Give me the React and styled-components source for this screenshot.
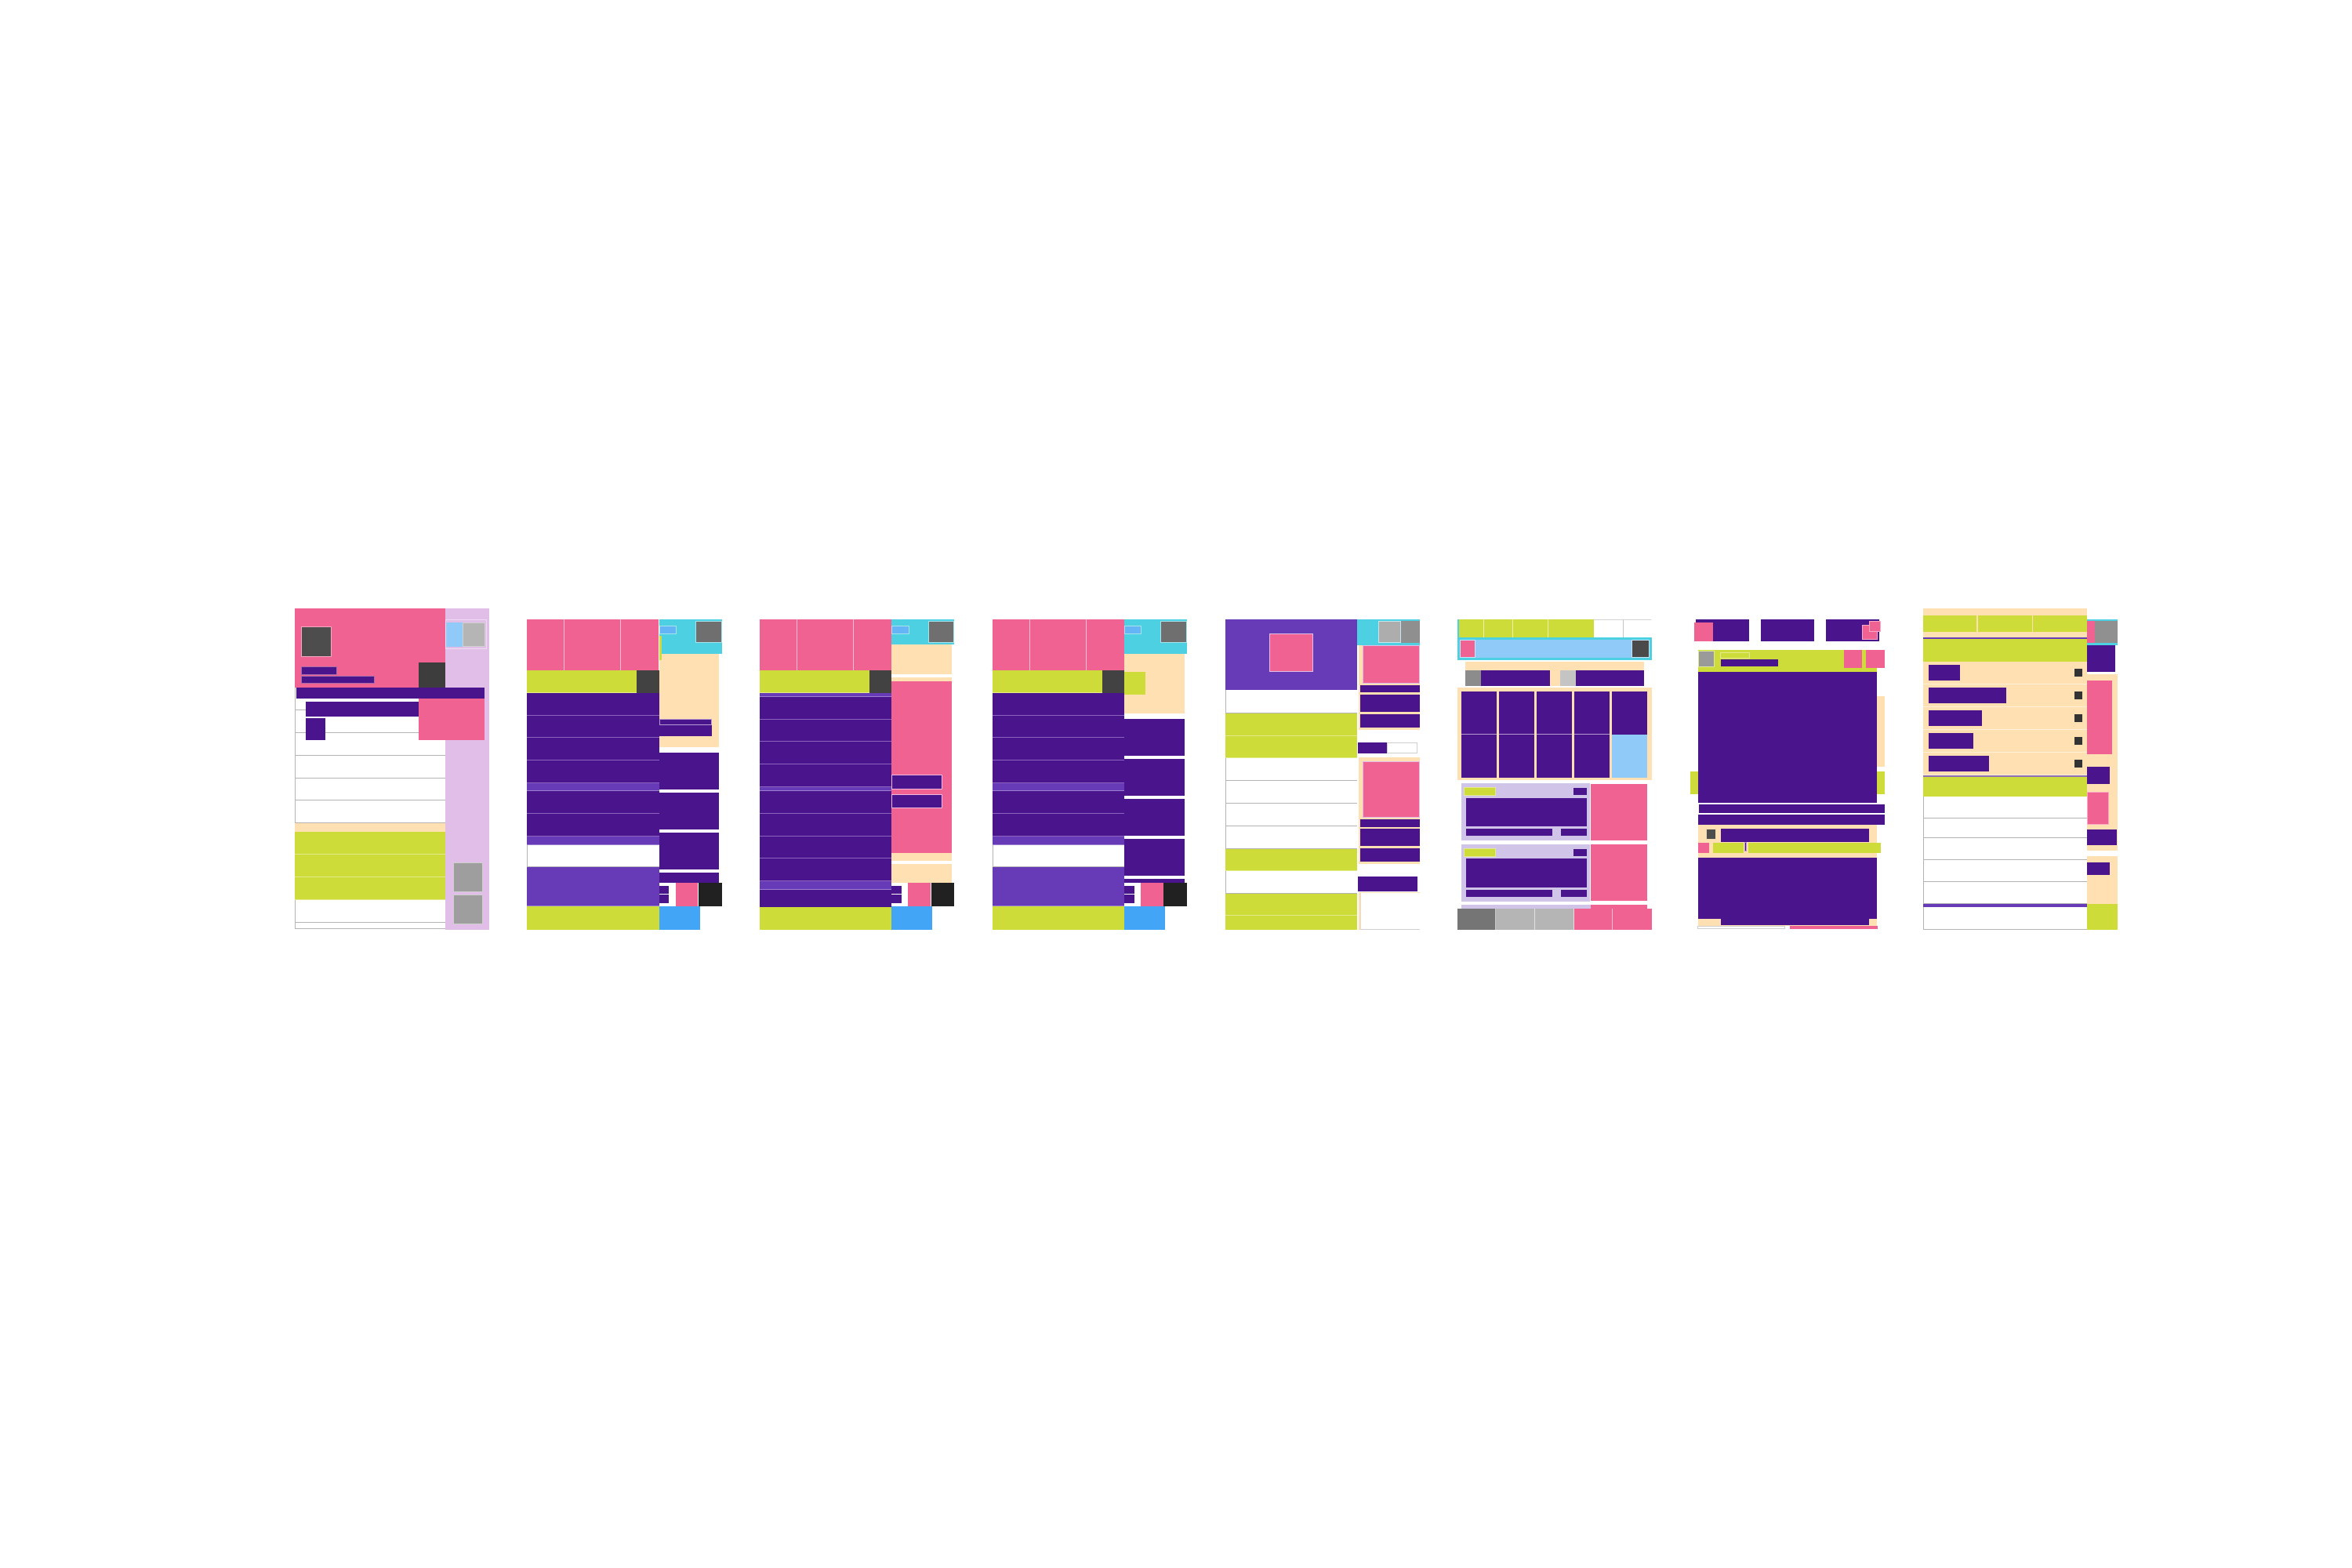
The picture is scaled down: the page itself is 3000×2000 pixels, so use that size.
import styled, { createGlobalStyle, css } from "styled-components";

const PINK = "#f06292";
const LIME = "#cddc39";
const PURPLE = "#4a148c";
const DEEP = "#673ab7";
const CYAN = "#4dd0e1";
const PEACH = "#ffe0b2";
const SKY = "#90caf9";
const BLUE = "#42a5f5";
const CHIP = "#64b5f6";
const LILAC = "#e1bee7";
const MAUVE = "#d1c4e9";

const tones = {
  white: { bg: "#fff", line: "#b4b4b4" },
  lime: { bg: LIME, line: "#e3ea8e" },
  purple: { bg: PURPLE, line: "#8c64c0" },
  deep: { bg: DEEP, line: "#9d7fd2" },
  peach: { bg: PEACH, line: "#fff0d8" },
};

const GlobalStyle = createGlobalStyle`
  html, body {
    margin: 0;
    background: #fff;
  }
  * {
    box-sizing: border-box;
  }
`;

const sized = css`
  flex: none;
  ${(p) => p.$w !== undefined && `width: ${p.$w}px;`}
  ${(p) => p.$h !== undefined && `height: ${p.$h}px;`}
  ${(p) => p.$c && `background: ${p.$c};`}
  ${(p) => p.$mt && `margin-top: ${p.$mt}px;`}
  ${(p) => p.$ml && `margin-left: ${p.$ml}px;`}
  ${(p) => p.$edge && `border: 1px solid ${p.$edge};`}
`;

const Strip = styled.div`
  display: flex;
  gap: 48.7px;
  min-height: 2000px;
  padding: 775.7px 0 0 375.8px;
`;

const Thumb = styled.div`
  position: relative;
  display: flex;
  flex: none;
  width: 248px;
  height: 410px;
  ${(p) => p.$inset && "padding-top: 14px;"}
`;

const Page = styled.div`
  position: relative;
  width: 248px;
  height: 396px;
`;

const Main = styled.div`
  flex: none;
  width: ${(p) => p.$w}px;
`;

const Side = styled.div`
  position: relative;
  flex: none;
  width: ${(p) => p.$w}px;
  ${(p) => p.$c && `background: ${p.$c};`}
`;

const Band = styled.div`
  ${sized}
  position: relative;
`;

const Bar = styled.div`
  ${sized}
`;

const Float = styled.div`
  ${sized}
  position: absolute;
  left: ${(p) => p.$x}px;
  top: ${(p) => p.$y}px;
`;

const Row = styled.div`
  position: relative;
  height: ${(p) => p.$h || 28.8}px;
  background: ${(p) => tones[p.$tone].bg};
  border-bottom: 1px solid ${(p) => tones[p.$tone].line};
  ${(p) => p.$tone === "white" && "border-left: 1px solid #b4b4b4;"}
`;

const TabRow = styled.div`
  display: flex;
  height: ${(p) => p.$h}px;
  ${(p) => p.$ml && `margin-left: ${p.$ml}px;`}
`;

const Tab = styled.div`
  flex: none;
  width: ${(p) => p.$w}px;
  background: ${(p) => p.$c};
  border-right: 1px solid ${(p) => p.$line || "rgba(255, 255, 255, 0.6)"};
  ${(p) => p.$top && `border-top: 1px solid ${p.$top};`}
`;

const Cluster = styled.div`
  display: flex;
  ${sized}
  ${(p) => p.$between && "justify-content: space-between;"}
  ${(p) => p.$pad && `padding: ${p.$pad};`}
  ${(p) => p.$col && "flex-direction: column;"}
`;

const Rows = ({ tone, n }) =>
  Array.from({ length: n }, (_, i) => <Row key={i} $tone={tone} />);

function PinkHeader() {
  return (
    <TabRow $h={65.3}>
      <Tab $w={48} $c={PINK} />
      <Tab $w={72} $c={PINK} />
      <Tab $w={48} $c={PINK} $line={PINK} />
    </TabRow>
  );
}

function LimeBar() {
  return (
    <Row $tone="lime">
      <Float $x={140} $y={0} $w={28.3} $h={28.8} $c="#424242" />
    </Row>
  );
}

function CyanTop({ h }) {
  return (
    <Cluster $w={80} $h={h} $c={CYAN} $between>
      <Bar $w={22.3} $h={11} $mt={8.7} $c={CHIP} $edge="#a6e4ec" />
      <Bar $w={33.7} $h={28.4} $mt={2.3} $c="#6f6f6f" $edge="#a6e4ec" />
    </Cluster>
  );
}

function SideFoot() {
  return (
    <>
      <Cluster $w={80} $h={30}>
        <Cluster $w={12.7} $col $pad="4px 0 0">
          <Bar $h={10.7} $c={PURPLE} />
          <Bar $h={10.7} $mt={1} $c={PURPLE} />
        </Cluster>
        <Bar $w={28.7} $h={30} $ml={8.3} $c={PINK} />
        <Bar $w={29.7} $h={30} $ml={0.6} $c="#212121" />
      </Cluster>
      <Bar $w={52} $h={30} $c={BLUE} />
    </>
  );
}

function Panel1() {
  return (
    <Thumb>
      <Main $w={192}>
        <Band $h={101.7} $c={PINK}>
          <Cluster $col $pad="23.7px 0 0 8.7px">
            <Bar $w={39} $h={38.3} $c="#4d4d4d" $edge="#f7a8c4" />
            <Bar $w={46} $h={11} $mt={12.3} $c={PURPLE} $edge="#a86aa8" />
            <Bar $w={94} $h={10.7} $mt={0.7} $c={PURPLE} $edge="#a86aa8" />
          </Cluster>
          <Float $x={158.7} $y={69} $w={33.3} $h={32.7} $c="#3d3d3d" />
        </Band>
        <Rows tone="white" n={6} />
        <Bar $h={11.2} $c={PEACH} />
        <Rows tone="lime" n={3} />
        <Row $tone="white" />
        <Row $tone="white" $h={8.9} />
      </Main>
      <Side $w={56} $c={LILAC}>
        <Cluster $w={53} $h={38.4} $mt={14.3} $pad="3.4px 3px 3.4px 0" $edge="#eedcf1">
          <Bar $w={21} $h={30.6} $c={SKY} />
          <Bar $w={29} $h={30.6} $c="#b5b5b5" $edge="#d0d0d0" />
        </Cluster>
        <Bar $w={38.3} $h={38.4} $mt={271.6} $ml={10} $c="#9e9e9e" $edge="#cfcfcf" />
        <Bar $w={38.3} $h={38.4} $mt={2.3} $ml={10} $c="#9e9e9e" $edge="#cfcfcf" />
      </Side>
      <Float $x={2} $y={101.7} $w={240.3} $h={13.6} $c={PURPLE} />
      <Float $x={14} $y={119.3} $w={144} $h={19.4} $c={PURPLE} />
      <Float $x={14} $y={140} $w={25.7} $h={28.3} $c={PURPLE} />
      <Float $x={158} $y={115.3} $w={84.3} $h={53} $c={PINK} />
    </Thumb>
  );
}

function Panel2() {
  return (
    <Thumb $inset>
      <Main $w={168.3}>
        <PinkHeader />
        <LimeBar />
        <Rows tone="purple" n={4} />
        <Row $tone="deep" $h={10.5} />
        <Rows tone="purple" n={2} />
        <Row $tone="deep" $h={10.5} />
        <Row $tone="white" />
        <Row $tone="deep" $h={50} />
        <Bar $h={29.2} $c={LIME} />
      </Main>
      <Side $w={80}>
        <CyanTop h={44} />
        <Cluster $w={76.7} $h={119.3} $c={PEACH} $col $pad="83.7px 0 0">
          <Bar $w={67.7} $h={8} $c={PURPLE} $edge="#b79ad0" />
          <Bar $w={67.7} $h={13.7} $c={PURPLE} />
        </Cluster>
        <Bar $w={76.7} $h={47.3} $mt={6.7} $c={PURPLE} />
        <Bar $w={76.7} $h={47.3} $mt={3.7} $c={PURPLE} />
        <Bar $w={76.7} $h={47} $mt={4} $c={PURPLE} />
        <Bar $w={76.7} $h={12.7} $mt={4} $c={PURPLE} />
        <SideFoot />
        <Float $x={0} $y={21.5} $w={3.3} $h={31} $c={LIME} />
      </Side>
    </Thumb>
  );
}

function Panel3() {
  return (
    <Thumb $inset>
      <Main $w={168.3}>
        <PinkHeader />
        <LimeBar />
        <Row $tone="deep" $h={5} />
        <Rows tone="purple" n={4} />
        <Row $tone="deep" $h={5} />
        <Rows tone="purple" n={4} />
        <Row $tone="deep" $h={11} />
        <Bar $h={21.5} $c={PURPLE} />
        <Bar $h={29.2} $c={LIME} />
      </Main>
      <Side $w={80}>
        <CyanTop h={32.7} />
        <Bar $w={76.7} $h={38} $c={PEACH} />
        <Bar $w={76.7} $h={4.6} $mt={4} $c={PEACH} />
        <Cluster $w={76.7} $h={219} $c={PINK} $col $pad="119.4px 0 0">
          <Bar $w={65} $h={19} $c={PURPLE} $edge="#f0b8e0" />
          <Bar $w={65} $h={17.6} $mt={6} $c={PURPLE} $edge="#f0b8e0" />
        </Cluster>
        <Bar $w={76.7} $h={9.7} $c={PEACH} />
        <Bar $w={76.7} $h={24} $mt={4} $c={PEACH} />
        <SideFoot />
      </Side>
    </Thumb>
  );
}

function Panel4() {
  return (
    <Thumb $inset>
      <Main $w={168.3}>
        <PinkHeader />
        <LimeBar />
        <Rows tone="purple" n={4} />
        <Row $tone="deep" $h={10.5} />
        <Rows tone="purple" n={2} />
        <Row $tone="deep" $h={10.5} />
        <Row $tone="white" />
        <Row $tone="deep" $h={50} />
        <Bar $h={29.2} $c={LIME} />
      </Main>
      <Side $w={80}>
        <CyanTop h={44} />
        <Cluster $w={76.7} $h={76.7} $c={PEACH} $pad="23.3px 0 0">
          <Bar $w={26.5} $h={29.4} $c={LIME} />
        </Cluster>
        <Bar $w={76.7} $h={47.3} $mt={6.3} $c={PURPLE} />
        <Bar $w={76.7} $h={47.4} $mt={4} $c={PURPLE} />
        <Bar $w={76.7} $h={47} $mt={3.6} $c={PURPLE} />
        <Bar $w={76.7} $h={47} $mt={4} $c={PURPLE} />
        <Bar $w={76.7} $h={4.7} $mt={4} $c={PURPLE} />
        <SideFoot />
      </Side>
    </Thumb>
  );
}

function ProductCard({ h, mt, pad, imageH, small, mid, low }) {
  return (
    <Cluster $w={77.7} $h={h} $mt={mt} $ml={2.3} $c={PEACH} $col $pad={`${pad}px 0 0 2px`}>
      <Bar $w={72.7} $h={imageH} $ml={3} $c={PINK} $edge={LILAC} />
      <Bar $w={75.7} $h={small} $mt={2.4} $c={PURPLE} />
      <Bar $w={75.7} $h={mid} $mt={2.7} $c={PURPLE} />
      <Bar $w={75.7} $h={low} $mt={3} $c={PURPLE} />
    </Cluster>
  );
}

const NoteBox = styled.div`
  width: 75.7px;
  height: 46.7px;
  background: #fff;
  border-bottom: 1px solid #cfcfcf;
  border-left: 1px solid #e8d8d0;
`;

function Panel5() {
  return (
    <Thumb $inset>
      <Main $w={168.3}>
        <Cluster $h={90.7} $c={DEEP} $pad="18.7px 0 0 56px">
          <Bar $w={56.3} $h={48.3} $c={PINK} $edge={LILAC} />
        </Cluster>
        <Row $tone="white" $h={29.4} />
        <Rows tone="lime" n={2} />
        <Rows tone="white" n={4} />
        <Row $tone="lime" />
        <Row $tone="white" $h={28.3} />
        <Row $tone="lime" />
        <Bar $h={17.2} $c={LIME} />
      </Main>
      <Side $w={79.7}>
        <Cluster $w={79.7} $h={33} $c={CYAN} $pad="2.3px 0 0 26.7px">
          <Bar $w={29.3} $h={28.4} $c="#adadad" $edge="#c4e6ec" />
          <Bar $w={23.7} $h={28.4} $c="#8f8f8f" />
        </Cluster>
        <ProductCard h={108.3} pad={0} imageH={49.3} small={9} mid={21.7} low={17.3} />
        <Cluster $w={75.7} $h={14} $mt={16.4} $ml={1}>
          <Bar $w={37} $h={14} $c={PURPLE} />
          <Bar $w={38.7} $h={14} $edge="#cfcfcf" />
        </Cluster>
        <ProductCard h={136.7} mt={4.3} pad={5.3} imageH={72} small={9.3} mid={21.6} low={17.4} />
        <Bar $w={75.7} $h={18.6} $mt={16} $ml={1} $c={PURPLE} />
        <Cluster $w={77.7} $h={47.7} $mt={1} $ml={2.3} $c={PEACH} $pad="1px 0 0 2px">
          <NoteBox />
        </Cluster>
      </Side>
    </Thumb>
  );
}

function ArticleCard() {
  return (
    <Cluster $w={237} $h={73.4} $ml={5}>
      <Cluster $w={164} $c={MAUVE} $col $pad="5px 4.3px 0 3px">
        <Cluster $between $h={11}>
          <Bar $w={41} $h={11} $c={LIME} $edge="#e3ea8e" />
          <Bar $w={17} $h={9} $mt={1} $c={PURPLE} />
        </Cluster>
        <Bar $w={154} $h={36.7} $mt={2.7} $ml={2.7} $c={PURPLE} />
        <Cluster $between $mt={3} $ml={2.7} $w={154}>
          <Bar $w={110.3} $h={9} $c={PURPLE} />
          <Bar $w={33} $h={9} $c={PURPLE} />
        </Cluster>
      </Cluster>
      <Bar $w={72} $h={72} $mt={0.7} $ml={1} $c={PINK} />
    </Cluster>
  );
}

const Grid = styled.div`
  display: grid;
  grid-template-columns: repeat(5, 44.6px);
  grid-template-rows: 54.7px 55.3px;
  column-gap: 3.4px;
  width: 247.3px;
  height: 117.7px;
  margin-top: 2.3px;
  padding: 5px;
  background: ${PEACH};
`;

const GridCell = styled.div`
  background: ${(p) => (p.$sky ? SKY : PURPLE)};
  border-bottom: 1px solid #b79ad0;
  &:nth-child(n + 5) {
    border-bottom: 0;
  }
`;

function Panel6() {
  return (
    <Thumb $inset>
      <Page>
        <TabRow $h={23}>
          <Tab $w={2} $c={CYAN} $line={CYAN} />
          <Tab $w={32} $c={LIME} />
          <Tab $w={36.7} $c={LIME} />
          <Tab $w={45.3} $c={LIME} />
          <Tab $w={57.3} $c={LIME} $line={LIME} />
          <Tab $w={38} $c="#fff" $line="#c4c4c4" $top="#d4d4d4" />
          <Tab $w={36} $c="#fff" $line="#fff" $top="#d4d4d4" />
        </TabRow>
        <Cluster $w={247.3} $h={29.7} $c={CYAN} $pad="3.7px 2.6px 3.4px 3px">
          <Bar $w={20} $c={PINK} $edge="#c5e6fb" />
          <Bar $w={198.7} $c={SKY} />
          <Bar $w={23} $c="#4a4a4a" $edge="#c5e6fb" />
        </Cluster>
        <Cluster $w={227.7} $h={31} $mt={1.3} $ml={10} $c={PEACH} $pad="11.7px 0 0">
          <Bar $w={20} $h={19.3} $c="#8c8c8c" />
          <Bar $w={87.3} $h={19.3} $c={PURPLE} />
          <Bar $w={20} $h={19.3} $ml={13.4} $c="#c4c4c4" />
          <Bar $w={87} $h={19.3} $c={PURPLE} />
        </Cluster>
        <Grid>
          {Array.from({ length: 9 }, (_, i) => (
            <GridCell key={i} />
          ))}
          <GridCell $sky />
        </Grid>
        <Cluster $col $mt={4.3}>
          <ArticleCard />
          <Cluster $h={4.3} />
          <ArticleCard />
        </Cluster>
        <Cluster $w={237} $h={4.7} $mt={4.3} $ml={5}>
          <Bar $w={165} $c={MAUVE} />
          <Bar $w={72} $c={PINK} />
        </Cluster>
        <TabRow $h={26.7}>
          <Tab $w={49} $c="#757575" />
          <Tab $w={50} $c="#b5b5b5" />
          <Tab $w={49.3} $c="#b5b5b5" />
          <Tab $w={49.7} $c={PINK} />
          <Tab $w={49.3} $c={PINK} $line={PINK} />
        </TabRow>
      </Page>
    </Thumb>
  );
}

function Panel7() {
  return (
    <Thumb $inset>
      <Page>
        <Cluster $h={28.3} $ml={7.3}>
          <Bar $w={67.7} $c={PURPLE} />
          <Bar $w={67.7} $ml={15} $c={PURPLE} />
          <Bar $w={68} $ml={15} $c={PURPLE} />
        </Cluster>
        <Cluster $w={228.3} $h={28.7} $mt={10.7} $ml={9.7} $c={LIME}>
          <Bar $w={21} $h={20.7} $mt={1.3} $c="#9a9a9a" $edge="#dfe79a" />
          <Cluster $col $ml={7.3} $pad="3.3px 0 0">
            <Bar $w={38} $h={8.4} $edge="#e3ea8e" />
            <Bar $w={73.3} $h={8.7} $mt={0.6} $ml={0.7} $c={PURPLE} />
          </Cluster>
        </Cluster>
        <Bar $w={228.3} $h={166.3} $ml={9.7} $c={PURPLE} />
        <Bar $w={236.7} $h={11} $mt={2.3} $ml={11} $c={PURPLE} />
        <Bar $w={238} $h={13} $mt={2} $ml={9.7} $c={PURPLE} />
        <Band $w={228.3} $h={41.7} $ml={9.7} $c={PEACH}>
          <Float $x={10} $y={5} $w={13.6} $h={14} $c="#4d4d4d" $edge="#f0d8b0" />
          <Float $x={29} $y={5} $w={189.6} $h={17.4} $c={PURPLE} />
          <Float $x={0} $y={23} $w={14} $h={13.4} $c={PINK} />
          <Float $x={19.3} $y={23} $w={38.7} $h={13.4} $c={LIME} />
          <Float $x={59.3} $y={21.7} $w={2.7} $h={12} $c={PURPLE} $edge="#b79ad0" />
          <Float $x={64} $y={23} $w={169} $h={13.4} $c={LIME} />
        </Band>
        <Bar $w={228.3} $h={78.3} $ml={9.7} $c={PURPLE} />
        <Cluster $w={228.3} $h={8.7} $ml={9.7} $c={PEACH} $pad="0 0 0 29px">
          <Bar $w={189.6} $h={8} $c={PURPLE} />
        </Cluster>
        <Cluster $h={4.7}>
          <Bar $w={112.3} $ml={8.7} $c="#fff" $edge="#cfcfcf" />
          <Bar $w={112.6} $ml={5.7} $c={PINK} />
        </Cluster>
        <Float $x={5} $y={4.3} $w={24} $h={24} $c={PINK} />
        <Float $x={219} $y={7} $w={19.7} $h={19.3} $c={PINK} $edge="#f7a8c4" />
        <Float $x={228.3} $y={2} $w={14.7} $h={14.7} $c={PINK} $edge="#f7a8c4" />
        <Float $x={195.7} $y={39} $w={23} $h={23.3} $c={PINK} />
        <Float $x={224} $y={39} $w={23.7} $h={23.3} $c={PINK} />
        <Float $x={238} $y={98.7} $w={9.7} $h={89.3} $c={PEACH} />
        <Float $x={0} $y={194.3} $w={9.7} $h={29} $c={LIME} />
        <Float $x={238} $y={194.3} $w={9.7} $h={29} $c={LIME} />
      </Page>
    </Thumb>
  );
}

const Entry = styled.div`
  display: flex;
  justify-content: space-between;
  align-items: center;
  height: 29px;
  padding: 0 5.7px 0 7px;
  background: ${PEACH};
  border-bottom: 1px solid #fff0d8;
`;

const EntryBar = styled.div`
  width: ${(p) => p.$w}px;
  height: 19.7px;
  background: ${PURPLE};
`;

const EntryDot = styled.div`
  width: 10.3px;
  height: 10.3px;
  background: #333;
`;

function Panel8() {
  return (
    <Thumb>
      <Main $w={209}>
        <Cluster $h={37.3} $c={PEACH} $pad="9px 0 7.3px">
          <Bar $w={68.7} $c={LIME} />
          <Bar $w={68.7} $ml={1.6} $c={LIME} />
          <Bar $w={68.7} $ml={1.3} $c={LIME} />
        </Cluster>
        <Bar $h={2} $c={DEEP} />
        <Bar $h={28.7} $c={LIME} />
        {[40.7, 99.3, 68.7, 57.7, 77.3].map((w) => (
          <Entry key={w}>
            <EntryBar $w={w} />
            <EntryDot />
          </Entry>
        ))}
        <Bar $h={2} $c="#8f6fb5" />
        <Bar $h={25} $c={LIME} />
        <Row $tone="white" $h={28} />
        <Row $tone="white" $h={25.7} />
        <Row $tone="white" $h={27.6} />
        <Row $tone="white" $h={27.7} />
        <Row $tone="white" $h={28} />
        <Bar $h={4.7} $c={DEEP} />
        <Row $tone="white" $h={28.3} />
      </Main>
      <Side $w={39}>
        <Cluster $h={32.7} $mt={14.3} $c={CYAN} $pad="2.4px 0 2.3px">
          <Bar $w={10.3} $c={PINK} />
          <Bar $w={28.7} $c="#909090" />
        </Cluster>
        <Bar $w={36} $h={34} $c={PURPLE} />
        <Cluster $h={140} $mt={3.3} $c={PEACH} $col $pad="7.7px 0 0">
          <Bar $w={32} $h={94.7} $c={PINK} />
          <Bar $w={29.3} $h={22.3} $mt={15.6} $c={PURPLE} />
        </Cluster>
        <Cluster $h={85} $c={PEACH} $col $pad="10px 0 0">
          <Bar $w={28.6} $h={42} $c={PINK} $edge="#f9a8c6" />
          <Bar $w={38.3} $h={20} $mt={6.4} $c={PURPLE} />
        </Cluster>
        <Cluster $h={60.7} $mt={7} $c={PEACH} $col $pad="7.7px 0 0">
          <Bar $w={29.3} $h={16.3} $c={PURPLE} />
        </Cluster>
        <Bar $h={33} $c={LIME} />
      </Side>
    </Thumb>
  );
}

export default function App() {
  return (
    <>
      <GlobalStyle />
      <Strip>
        <Panel1 />
        <Panel2 />
        <Panel3 />
        <Panel4 />
        <Panel5 />
        <Panel6 />
        <Panel7 />
        <Panel8 />
      </Strip>
    </>
  );
}
